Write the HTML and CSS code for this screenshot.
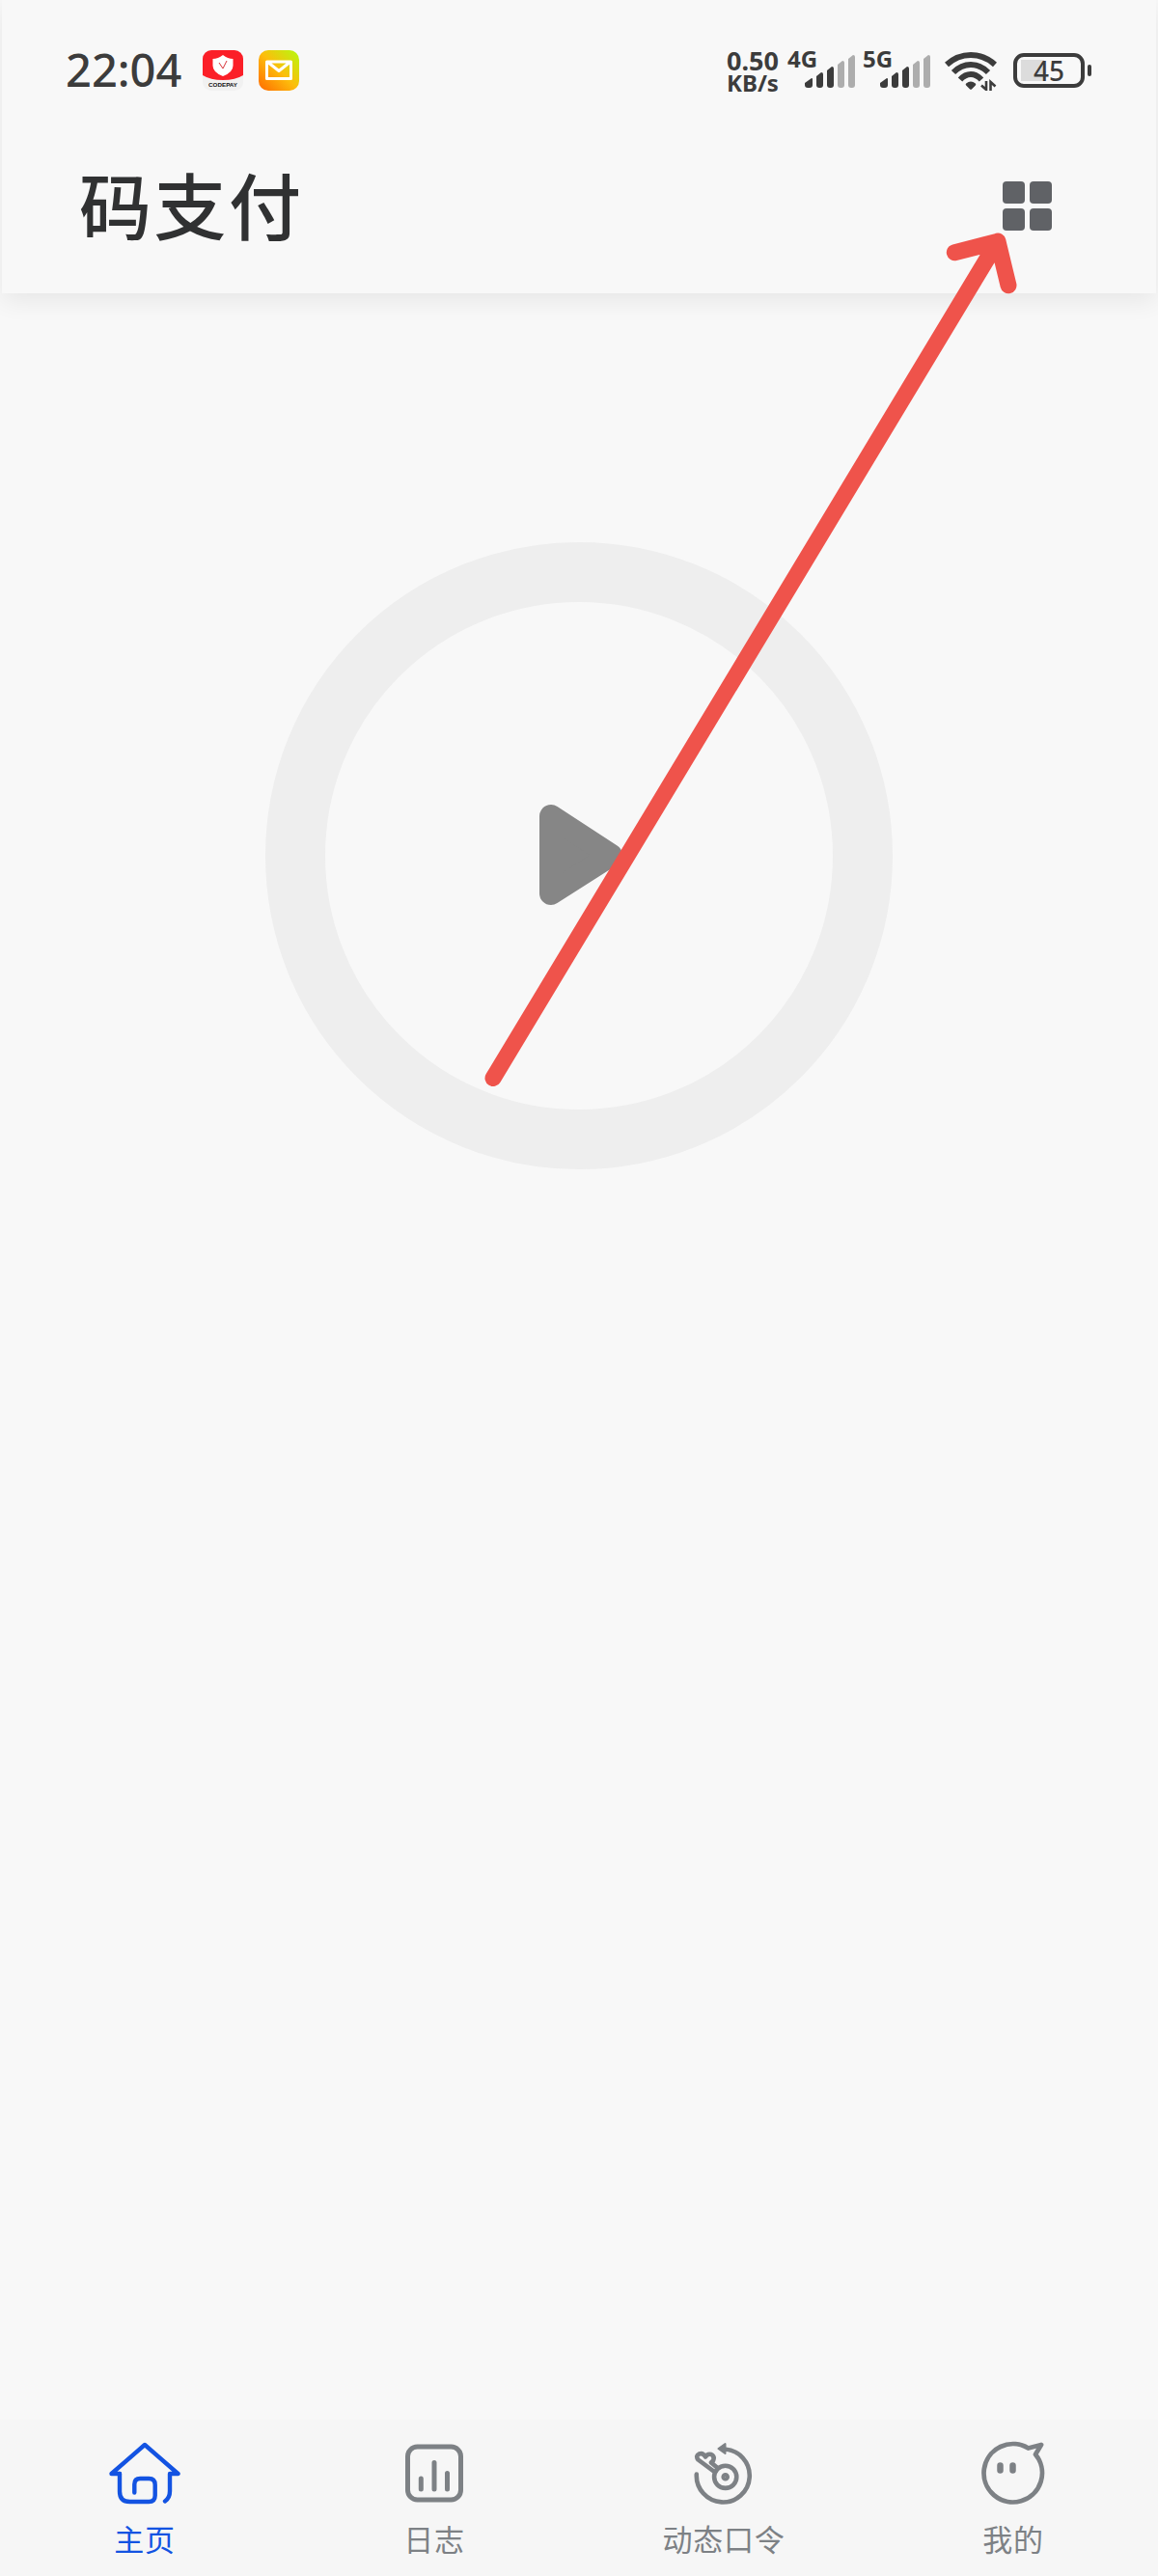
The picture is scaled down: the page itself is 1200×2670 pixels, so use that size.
FILE: index.html
```html
<!DOCTYPE html>
<html lang="zh-CN">
<head>
    <meta charset="UTF-8">
    <title>码支付</title>
    <link rel="stylesheet" href="styles.css">
</head>
<body>
    <div class="page">
        <header class="header">
            <div class="status">
                <span class="time">22:04</span>
                <svg class="app" width="42" height="42" viewBox="0 0 42 42">
                    <rect width="42" height="42" rx="9" fill="#f1f1f1"/>
                    <path d="M0 26V9a9 9 0 0 1 9-9h24a9 9 0 0 1 9 9v17q-8 5-21 5T0 26z" fill="#fb1f28"/>
                    <path d="M21 5q5 4 10.500 4v7q0 7-10.500 11Q10.500 23 10.500 16V9Q16 9 21 5z" fill="#fff"/>
                    <path d="M17 13l4 6 4-8" fill="none" stroke="#d8343a" stroke-width="1"/>
                    <text class="app-name" x="6" y="38" textLength="30" lengthAdjust="spacingAndGlyphs">CODEPAY</text>
                </svg>
                <svg class="app" width="42" height="42" viewBox="0 0 42 42">
                    <defs>
                        <linearGradient id="mail" x1="0" y1="1" x2="1" y2="0">
                            <stop offset="0" stop-color="#ff6a00"/>
                            <stop offset=".5" stop-color="#fdbd0c"/>
                            <stop offset="1" stop-color="#b4fb10"/>
                        </linearGradient>
                    </defs>
                    <rect width="42" height="42" rx="10" fill="url(#mail)"/>
                    <path d="M8.500 12h25v17.500h-25zM9 12l12 9.500L33 12" fill="none" stroke="#fff" stroke-width="3" stroke-linejoin="round"/>
                </svg>
                <div class="speed"><span class="num">0.50</span><span>KB/s</span></div>
                <div class="signal">
                    <span class="net">4G</span>
                    <svg class="bars" width="54" height="36" viewBox="0 0 54 36">
                        <g fill="#3c3c3c">
                            <path d="M0 30l7-5a1 1 0 0 1 1 1v6q0 3-3 3H3q-3 0-3-3z"/>
                            <path d="M12 23l5-4q2 0 2 2v11q0 3-3 3h-1q-3 0-3-3z"/>
                            <path d="M23 17l5-4q2 0 2 2v17q0 3-3 3h-1q-3 0-3-3z"/>
                        </g>
                        <g fill="#adadad">
                            <path d="M34 11l5-4q2 0 2 2v23q0 3-3 3h-1q-3 0-3-3z"/>
                            <path d="M45 5l5-4q2 0 2 2v29q0 3-3 3h-1q-3 0-3-3z"/>
                        </g>
                    </svg>
                </div>
                <div class="signal">
                    <span class="net">5G</span>
                    <svg class="bars" width="54" height="36" viewBox="0 0 54 36">
                        <g fill="#3c3c3c">
                            <path d="M0 30l7-5a1 1 0 0 1 1 1v6q0 3-3 3H3q-3 0-3-3z"/>
                            <path d="M12 23l5-4q2 0 2 2v11q0 3-3 3h-1q-3 0-3-3z"/>
                            <path d="M23 17l5-4q2 0 2 2v17q0 3-3 3h-1q-3 0-3-3z"/>
                        </g>
                        <g fill="#adadad">
                            <path d="M34 11l5-4q2 0 2 2v23q0 3-3 3h-1q-3 0-3-3z"/>
                            <path d="M45 5l5-4q2 0 2 2v29q0 3-3 3h-1q-3 0-3-3z"/>
                        </g>
                    </svg>
                </div>
                <svg class="wifi" width="54" height="42" viewBox="0 0 54 42">
                    <g fill="none" stroke="#3c3c3c" stroke-width="6">
                        <path d="M2 15Q13 5 27 5t25 10"/>
                        <path d="M9 23q8-8 18-8t18 8"/>
                        <path d="M16 30.500q5-5.500 11-5.500t11 5.500"/>
                    </g>
                    <path d="M23 35.500q4-3.500 8 0L27 39.500z" fill="#3c3c3c" stroke="#3c3c3c" stroke-width="2.500" stroke-linejoin="round"/>
                    <path d="M43 32v9l-5-4.500M47.500 42v-9l5 4.500" fill="none" stroke="#3c3c3c" stroke-width="2.600"/>
                </svg>
                <div class="battery"><span>45</span></div>
            </div>
            <div class="title-row">
                <h1>码支付</h1>
                <div class="menu"><i></i><i></i><i></i><i></i></div>
            </div>
        </header>

        <main class="main">
            <div class="ring">
                <svg width="90" height="106" viewBox="0 0 90 106">
                    <path d="M16 13v80l62-39.500z" fill="#868686" stroke="#868686" stroke-width="24" stroke-linejoin="round"/>
                </svg>
            </div>
        </main>

        <nav class="tabs">
            <a class="tab active">
                <svg width="76" height="70" viewBox="0 0 76 70" stroke-width="4.400">
                    <path d="M12 36H3.500L38 6l34.500 30H64v18q0 7-5 10.500"/>
                    <path d="M12 36v18.500Q12 65 22.500 65h19.700q6.500 0 6.500-6.500v-11q0-6.500-6.500-6.500h-8.900q-6 0-6 6v8.500"/>
                </svg>
                <span>主页</span>
            </a>
            <a class="tab">
                <svg width="76" height="70" viewBox="0 0 76 70" stroke-width="5">
                    <rect x="10.500" y="8" width="55" height="55" rx="10"/>
                    <path d="M24.300 41v11M38 24.500V52M51.500 35.500V52"/>
                </svg>
                <span>日志</span>
            </a>
            <a class="tab">
                <svg width="76" height="70" viewBox="0 0 76 70" stroke-width="4.600">
                    <path d="M9.800 36.500A27.500 27.500 0 1 0 39 10.500"/>
                    <path d="M32.500 10l7-5v10z" fill="#7d8185" stroke-width="2"/>
                    <path d="M29 34.500L11.500 21.500q-3-4 1-6 4-1.500 6.500 3 2-3.500 6-2.500 4 2 2 6.500l-2 2 6 5"/>
                    <circle cx="39.700" cy="39.300" r="11.600"/>
                    <circle cx="39.700" cy="39.300" r="2"/>
                </svg>
                <span>动态口令</span>
            </a>
            <a class="tab">
                <svg width="76" height="70" viewBox="0 0 76 70" stroke-width="4.800">
                    <path d="M53.500 9.500A30.200 30.200 0 1 0 61 16L67 6z"/>
                    <path d="M24.500 27.500v5M37.500 27.500v5" stroke-width="6.500"/>
                </svg>
                <span>我的</span>
            </a>
        </nav>

        <!-- 指向右上角菜单的箭头 -->
        <svg class="arrow" width="1200" height="1200" viewBox="0 0 1200 1200">
            <path d="M511 1117.500L1034 250M989.300 261.700L1034 250.300 1045 295.700"/>
        </svg>
    </div>
</body>
</html>
```

FILE: styles.css
```css
html, body, h1{margin: 0;padding: 0;}
body{background: #f8f8f8;font-family: "Noto Sans", "Noto Sans CJK SC", sans-serif;}
.page{position: relative;display: flex;flex-direction: column;height: 2670px;overflow: hidden;}
.header{box-sizing: border-box;height: 304px;margin: 0 2px;background: #f8f8f8;box-shadow: 0 8px 24px rgba(0,0,0,.07);}

/* 状态栏 */
.status{display: flex;box-sizing: border-box;height: 146px;padding: 0 66px;color: #3c3c3c;line-height: 1;}
.time{flex: none;width: 142px;padding-top: 49px;font-size: 47px;font-weight: 500;}
.app{flex: none;margin: 52px 16px 0 0;}
.app-name{font: bold 5.500px "Liberation Sans", sans-serif;fill: #111;}
.speed{display: flex;flex: none;flex-direction: column;width: 63px;margin: 49px 0 0 427px;font-size: 24px;font-weight: 700;line-height: 20px;}
.speed .num{font-size: 27px;line-height: 27px;}
.signal{display: flex;flex: none;width: 78px;padding-top: 50px;}
.net{flex: none;width: 18px;font-size: 24px;font-weight: 700;line-height: 22px;white-space: nowrap;}
.bars{flex: none;margin-top: 6px;}
.wifi{flex: none;margin: 52px 0 0 7px;}
.battery{position: relative;box-sizing: border-box;flex: none;width: 74px;height: 36px;margin: 55px 0 0 17px;border: 4px solid #3c3c3c;border-radius: 11px;background: linear-gradient(90deg, #dcdcdc 24px, transparent 24px) 4px 3px / 58px 22px no-repeat;text-align: center;}
.battery span{font-size: 28px;font-weight: 500;line-height: 28px;}
.battery:after{content: "";position: absolute;right: -11px;top: 8px;width: 4px;height: 12px;border-radius: 2px;background: #3c3c3c;}

.title-row{display: flex;justify-content: space-between;padding: 12px 108px 0 80px;}
h1{color: #303132;font: 500 75px/106px "Noto Sans CJK SC", sans-serif;letter-spacing: 2.500px;}
.menu{display: grid;grid-template-columns: 23px 23px;grid-auto-rows: 23px;gap: 5px;margin-top: 30px;}
.menu i{border-radius: 4px;background: #606266;}

.main{flex: 1;}
.ring{display: flex;align-items: center;justify-content: center;box-sizing: border-box;width: 650px;height: 650px;margin: 258px auto 0;border: 62px solid #eee;border-radius: 50%;}
.ring svg{margin-bottom: 3px;}

/* 底部导航 */
.tabs{display: flex;height: 162px;background: #f6f6f6;}
.tab{display: flex;flex: 1;flex-direction: column;align-items: center;padding-top: 20px;box-sizing: border-box;color: #7d8185;}
.tab svg{fill: none;stroke: currentColor;stroke-linecap: round;stroke-linejoin: round;}
.tab span{margin-top: 10px;font: 400 31px/46px "Noto Sans CJK SC", sans-serif;letter-spacing: .8px;}
.active{color: #1353e2;}

.arrow{position: absolute;left: 0;top: 0;fill: none;stroke: #ef534b;stroke-width: 17px;stroke-linecap: round;stroke-linejoin: round;pointer-events: none;}
```
